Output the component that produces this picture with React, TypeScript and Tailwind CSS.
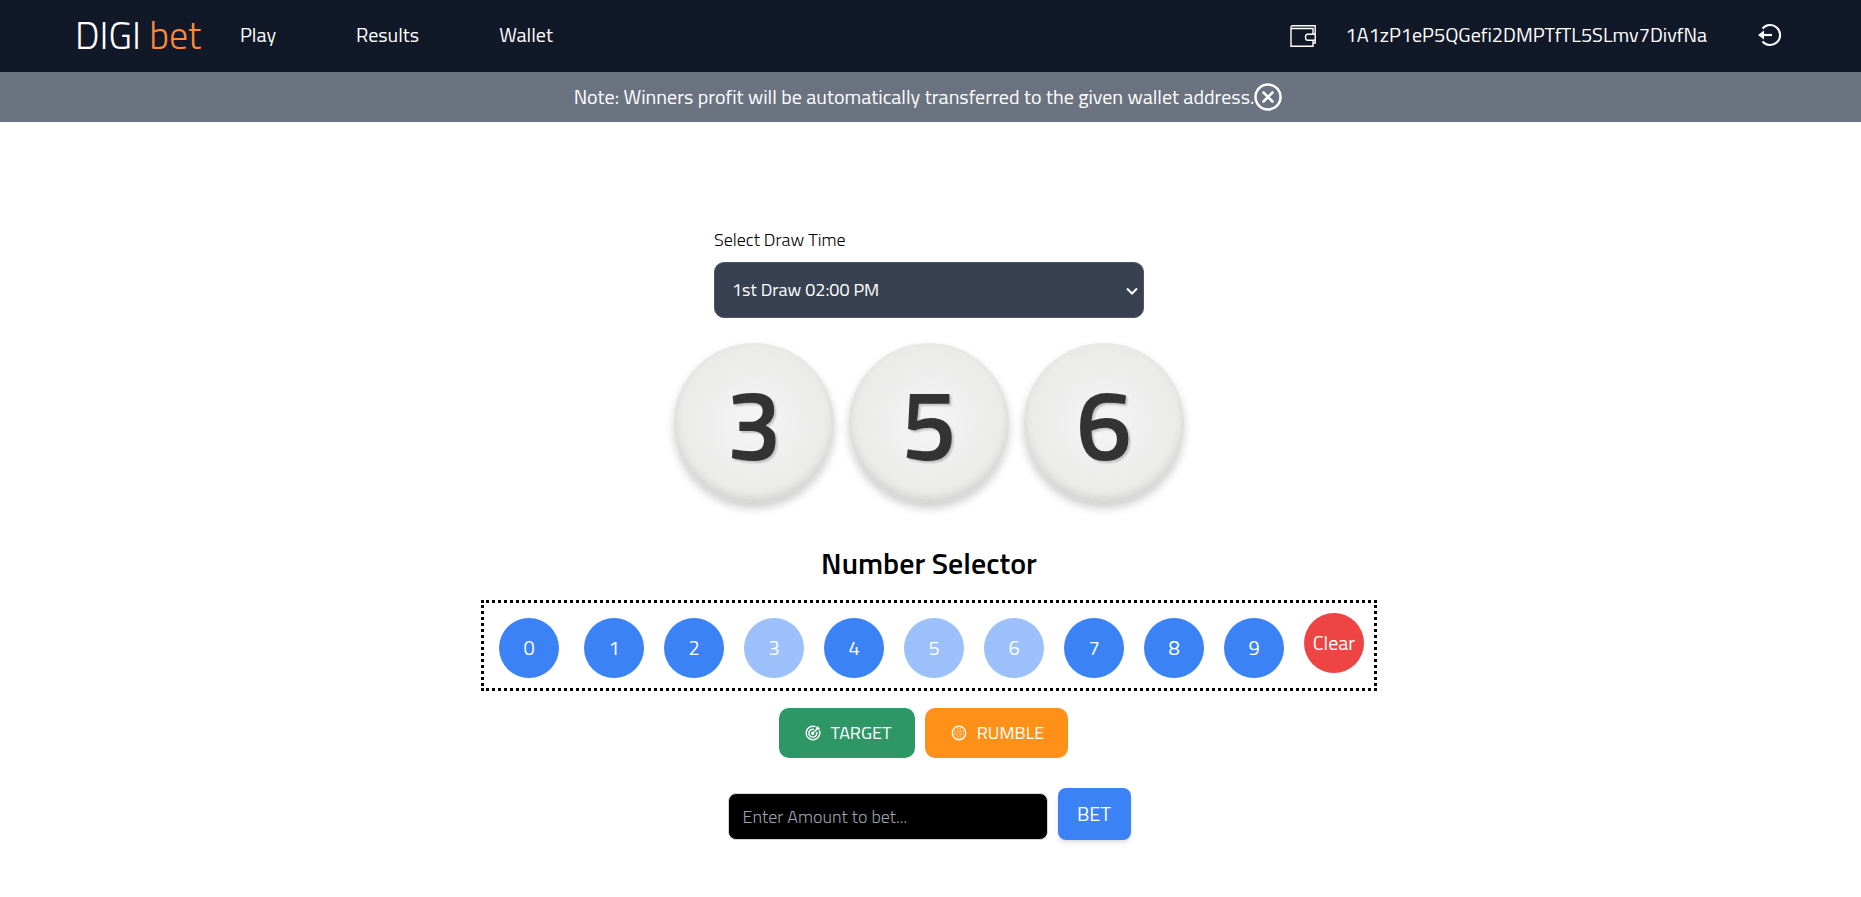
import { useState } from "react";

const DIGITS = [0, 1, 2, 3, 4, 5, 6, 7, 8, 9];

const DRAWS = ["1st Draw 02:00 PM", "2nd Draw 05:00 PM", "3rd Draw 09:00 PM"];

function WalletIcon() {
  return (
    <svg viewBox="0 0 26 24" className="h-6 w-[26px]" fill="none" stroke="currentColor" strokeWidth="1.4" aria-hidden="true">
      <path d="M1 4.500Q1 2.700 2.800 2.700H25.200V20H23" />
      <path d="M1 4.500V23.300H23V17.300M1.500 5.500H23V11.300" />
      <path d="M25 11.300H17.500Q15.500 11.300 15.500 14.300T17.500 17.300H25" />
    </svg>
  );
}

function LogoutIcon() {
  return (
    <svg viewBox="0 0 24 24" className="size-6" fill="none" stroke="currentColor" aria-hidden="true">
      <path d="M4.500 5.500A10 10 0 1 1 4.500 18.500" strokeWidth="2" />
      <path d="M4 12h10" strokeWidth="2.200" />
      <path d="M0 12l6-4.500v9z" fill="currentColor" stroke="none" />
    </svg>
  );
}

function CloseIcon() {
  return (
    <svg viewBox="0 0 28 28" className="size-7" fill="none" stroke="currentColor" strokeWidth="2.500" strokeLinecap="round" aria-hidden="true">
      <circle cx="14" cy="14" r="12.500" />
      <path d="M9.500 9.500l9 9M18.500 9.500l-9 9" />
    </svg>
  );
}

function TargetIcon() {
  return (
    <svg viewBox="0 0 16 16" className="size-4" fill="none" stroke="currentColor" strokeWidth="1.400" aria-hidden="true">
      <path d="M10.500 1.700A6.800 6.800 0 1 0 14.300 5.500" />
      <path d="M9 4.300A4 4 0 1 0 11.700 7" />
      <path d="M7.500 8.500L12 4" />
      <circle cx="7.700" cy="8.300" r="1" fill="currentColor" />
      <path d="M11 5V2.500L13 .8l.4 1.800 1.800.4L13.500 5z" fill="currentColor" stroke="none" />
    </svg>
  );
}

function RumbleIcon() {
  return (
    <svg viewBox="0 0 16 16" className="size-4" aria-hidden="true">
      <circle cx="8" cy="8" r="6.700" fill="none" stroke="currentColor" strokeWidth="1.400" />
      <g fill="currentColor" opacity="0.800">
        {[3.5, 5, 6.5, 8, 9.5, 11, 12.5].map((y) =>
          [3.5, 5, 6.5, 8, 9.5, 11, 12.5].map((x) =>
            Math.hypot(x - 8, y - 8) < 5 ? <circle key={`${x}-${y}`} cx={x} cy={y} r="0.480" /> : null,
          ),
        )}
      </g>
    </svg>
  );
}

export default function App() {
  const [picked, setPicked] = useState<number[]>([3, 5, 6]);
  const [noteOpen, setNoteOpen] = useState(true);

  return (
    <div className="min-h-screen bg-white font-['Titillium_Web',Roboto,sans-serif] text-black">
      <header className="flex h-[72px] items-center justify-between bg-[#111827] pr-[79px] pb-0.5 pl-[75px] text-xl text-white">
        <nav className="flex items-center">
          <a href="#home" className="w-[165px] text-[38px] leading-10 font-light whitespace-nowrap">
            DIGI <span className="text-[#ff8a38]">bet</span>
          </a>
          <div className="flex items-center gap-20">
            <a href="#play">Play</a>
            <a href="#results">Results</a>
            <a href="#wallet">Wallet</a>
          </div>
        </nav>
        <div className="flex items-center">
          <WalletIcon />
          <span className="ml-[30px]">1A1zP1eP5QGefi2DMPTfTL5SLmv7DivfNa</span>
          <button type="button" aria-label="Log out" className="ml-[51px]">
            <LogoutIcon />
          </button>
        </div>
      </header>

      {noteOpen && (
        <div className="flex h-[50px] items-center justify-center bg-[#6b7280] pr-[5px] text-xl text-white">
          <p>Note: Winners profit will be automatically transferred to the given wallet address.</p>
          <button type="button" aria-label="Close note" onClick={() => setNoteOpen(false)}>
            <CloseIcon />
          </button>
        </div>
      )}

      <main className="flex flex-col items-center pt-[104px] pr-[3px]">
        <div className="flex w-[430px] flex-col gap-2">
          <label htmlFor="draw" className="text-lg font-light">
            Select Draw Time
          </label>
          <div className="relative">
            <select
              id="draw"
              className="h-14 w-full appearance-none rounded-[10px] border border-gray-600 bg-[#374151] pr-8 pl-[17px] text-lg text-white"
            >
              {DRAWS.map((d) => (
                <option key={d}>{d}</option>
              ))}
            </select>
            <svg
              viewBox="0 0 12 8"
              className="pointer-events-none absolute top-[25px] right-[6px] h-2 w-3"
              fill="none"
              stroke="white"
              strokeWidth="2"
              aria-hidden="true"
            >
              <path d="M1 1.500l5 5 5-5" />
            </svg>
          </div>
        </div>

        <div className="mt-[25px] flex h-40 gap-[15px]">
          {picked.map((n, i) => (
            <div
              key={i}
              className="flex size-40 items-center justify-center rounded-full bg-[radial-gradient(circle,#f5f5f5,#e6e5e4)] text-[100px] leading-none font-semibold text-[#333] shadow-[0_5px_10px_rgba(0,0,0,0.2),inset_0_-5px_10px_rgba(0,0,0,0.1)] [text-shadow:2px_2px_2px_rgba(0,0,0,0.2)]"
            >
              {n}
            </div>
          ))}
        </div>

        <h1 className="mt-[42px] text-3xl font-semibold">Number Selector</h1>

        <div className="mt-[19px] flex h-[91px] gap-5 border-[3px] border-dotted border-black pt-[10px] pr-[10px] pl-[15px] text-xl text-white">
          {DIGITS.map((n) => (
            <button
              key={n}
              type="button"
              disabled={picked.includes(n)}
              onClick={() => setPicked((p) => (p.length < 3 ? [...p, n] : p))}
              className="mt-[5px] size-[60px] rounded-full bg-[#3b82f6] first:mr-[5px] disabled:opacity-50"
            >
              {n}
            </button>
          ))}
          <button type="button" onClick={() => setPicked([])} className="size-[60px] rounded-full bg-[#ef4444]">
            Clear
          </button>
        </div>

        <div className="mt-[17px] flex gap-[10px] pr-[11px] text-lg text-white">
          <button type="button" className="flex h-[50px] w-[136px] items-center justify-center gap-[10px] rounded-[10px] bg-[#2f9666] pl-0.5">
            <TargetIcon />
            TARGET
          </button>
          <button type="button" className="flex h-[50px] w-[143px] items-center justify-center gap-[10px] rounded-[10px] bg-[#ff9119] pl-0.5">
            <RumbleIcon />
            RUMBLE
          </button>
        </div>

        <form className="mt-[30px] flex items-end gap-[10px]" onSubmit={(e) => e.preventDefault()}>
          <input
            type="text"
            aria-label="Bet amount"
            placeholder="Enter Amount to bet..."
            className="h-[47px] w-80 rounded-lg border border-gray-300 bg-black px-[14px] text-lg font-light text-white placeholder:text-gray-400"
          />
          <button type="submit" className="h-[52px] w-[73px] rounded-lg bg-[#3b82f6] text-xl text-white shadow-md">
            BET
          </button>
        </form>
      </main>
    </div>
  );
}
